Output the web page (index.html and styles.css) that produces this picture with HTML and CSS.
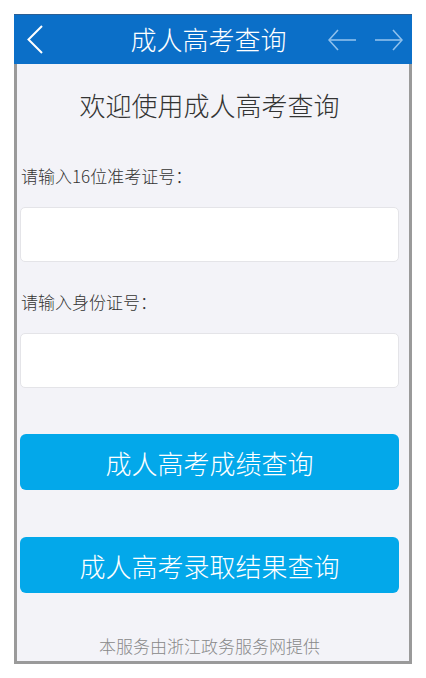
FILE: index.html
```html
<!DOCTYPE html>
<html lang="zh-CN">
<head>
    <meta charset="UTF-8">
    <meta name="viewport" content="width=device-width, initial-scale=1.0">
    <title>成人高考查询</title>
    <link rel="stylesheet" href="styles.css">
</head>
<body>
    <div class="frame">
        <!-- top bar -->
        <div class="topbar">
            <div class="topbar-left">
                <svg class="back" width="16" height="29" viewBox="0 0 16 29">
                    <polyline points="15,1 1.5,14.5 15,28" fill="none" stroke="#fff" stroke-width="2"/>
                </svg>
            </div>
            <div class="topbar-title">成人高考查询</div>
            <div class="topbar-right">
                <svg class="nav-arrow" width="28" height="22" viewBox="0 0 28 22">
                    <polyline points="10,1 1,11 10,21" fill="none" stroke="#8fc0ec" stroke-width="1.6"/>
                    <line x1="1" y1="11" x2="28" y2="11" stroke="#8fc0ec" stroke-width="1.6"/>
                </svg>
                <svg class="nav-arrow" width="28" height="22" viewBox="0 0 28 22">
                    <polyline points="18,1 27,11 18,21" fill="none" stroke="#8fc0ec" stroke-width="1.6"/>
                    <line x1="0" y1="11" x2="27" y2="11" stroke="#8fc0ec" stroke-width="1.6"/>
                </svg>
            </div>
        </div>

        <div class="content">
            <h1 class="welcome">欢迎使用成人高考查询</h1>

            <label class="field-label" for="examNo">请输入16位准考证号：</label>
            <input class="field-input" type="text" id="examNo">

            <label class="field-label second" for="idNo">请输入身份证号：</label>
            <input class="field-input" type="text" id="idNo">

            <button class="query-btn first">成人高考成绩查询</button>
            <button class="query-btn second">成人高考录取结果查询</button>

            <p class="footer">本服务由浙江政务服务网提供</p>
        </div>
    </div>
</body>
</html>
```

FILE: styles.css
```css
body {
    margin: 0;
    background-color: #fff;
    font-family: 'Noto Sans CJK SC', 'Noto Sans', sans-serif;
    font-weight: 300;
}

.frame {
    margin: 14px 0 0 14px;
    width: 398px;
    height: 650px;
    box-sizing: border-box;
    border-left: 3px solid #9a9a9a;
    border-right: 3px solid #9a9a9a;
    border-bottom: 3px solid #9a9a9a;
    background-color: #f3f3f8;
    display: flex;
    flex-direction: column;
}

.topbar {
    height: 50px;
    margin: 0 -3px;
    padding: 0 22px 0 13px;
    background-color: #0b6fc8;
    border-top: 1px solid #2b5f94;
    box-sizing: border-box;
    display: grid;
    grid-template-columns: 1fr auto 1fr;
    align-items: center;
}

.topbar-left {
    display: flex;
    align-items: center;
}

.back {
    display: block;
}

.topbar-title {
    color: #fff;
    font-size: 26px;
    line-height: 30px;
    margin-top: -2px;
}

.topbar-right {
    display: flex;
    justify-content: flex-end;
    align-items: center;
    gap: 19px;
    margin-right: -13px;
}

.nav-arrow {
    display: block;
}

.content {
    padding: 0 10px 0 3px;
    display: flex;
    flex-direction: column;
}

.welcome {
    margin: 26px 0 0;
    font-size: 26px;
    font-weight: 300;
    line-height: 30px;
    color: #333;
    text-align: center;
}

.field-label {
    margin: 44px 0 0 1px;
    font-size: 17px;
    line-height: 24px;
    color: #333;
}

.field-label.second {
    margin-top: 28px;
}

.field-input {
    margin-top: 19px;
    height: 55px;
    box-sizing: border-box;
    background-color: #fff;
    border: 1px solid #e4e4e8;
    border-radius: 5px;
    padding: 0 10px;
    font-size: 17px;
}

.query-btn {
    height: 56px;
    border: none;
    border-radius: 6px;
    background-color: #03a8ea;
    color: #fff;
    font-family: inherit;
    font-weight: 300;
    font-size: 26px;
    cursor: pointer;
}

.query-btn.first {
    margin-top: 46px;
}

.query-btn.second {
    margin-top: 47px;
}

.footer {
    margin: 41px 0 0;
    font-size: 17px;
    line-height: 24px;
    color: #888;
    text-align: center;
}
```
